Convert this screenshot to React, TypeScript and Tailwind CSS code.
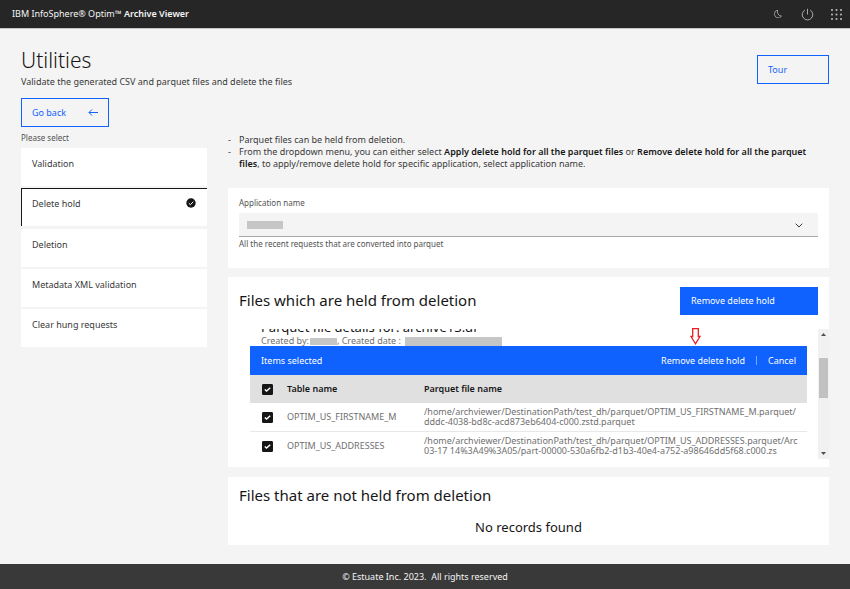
import React from "react";

const utilities = [
  "Validation",
  "Delete hold",
  "Deletion",
  "Metadata XML validation",
  "Clear hung requests",
];

const files = [
  {
    table: "OPTIM_US_FIRSTNAME_M",
    lines: [
      "/home/archviewer/DestinationPath/test_dh/parquet/OPTIM_US_FIRSTNAME_M.parquet/",
      "dddc-4038-bd8c-acd873eb6404-c000.zstd.parquet",
    ],
  },
  {
    table: "OPTIM_US_ADDRESSES",
    lines: [
      "/home/archviewer/DestinationPath/test_dh/parquet/OPTIM_US_ADDRESSES.parquet/Arc",
      "03-17 14%3A49%3A05/part-00000-530a6fb2-d1b3-40e4-a752-a98646dd5f68.c000.zs",
    ],
  },
];

function MoonIcon() {
  return (
    <svg viewBox="0 0 32 32" className="size-2.5" fill="currentColor" aria-hidden="true">
      <path d="M13.5 5.41A15.08 15.08 0 0 0 25.1 23.61a11.11 11.11 0 0 1-7.98 3.39c-.14 0-.28.005-.42 0A11.09 11.09 0 0 1 13.5 5.41M14.98 3a1 1 0 0 0-.17.016A13.1 13.1 0 0 0 16.63 29c.16.006.33 0 .49 0a13.07 13.07 0 0 0 10.7-5.56 1.01 1.01 0 0 0-.78-1.56A13.08 13.08 0 0 1 15.89 4.38 1.01 1.01 0 0 0 14.98 3Z" />
    </svg>
  );
}

function PowerIcon() {
  return (
    <svg viewBox="0 0 32 32" className="size-[13px]" fill="none" stroke="currentColor" strokeWidth="2" aria-hidden="true">
      <path d="M22.5 5.05a13 13 0 1 1-13 0M16 2v14" />
    </svg>
  );
}

function GridIcon() {
  const spots = [1, 5.5, 10];
  return (
    <svg viewBox="0 0 11 11" className="size-[11px]" fill="currentColor" aria-hidden="true">
      {spots.map((y) =>
        spots.map((x) => <rect key={x + "-" + y} x={x - 0.85} y={y - 0.85} width="1.7" height="1.7" />),
      )}
    </svg>
  );
}

function CheckBox({ label }: { label: string }) {
  return (
    <span className="relative block size-[11px]">
      <input
        type="checkbox"
        defaultChecked
        aria-label={label}
        className="peer block size-[11px] appearance-none rounded-[1px] border border-[#161616] checked:bg-[#161616]"
      />
      <svg viewBox="0 0 11 11" className="pointer-events-none absolute inset-0 hidden peer-checked:block" fill="none" stroke="white" strokeWidth="1.4" aria-hidden="true">
        <path d="M2.8 5.4 4.6 7.1 8.2 3.7" />
      </svg>
    </span>
  );
}

export default function App() {
  const [selected, setSelected] = React.useState("Delete hold");
  return (
    <div className="flex min-h-screen flex-col bg-[#f4f4f4] font-['Noto_Sans',sans-serif] text-[9px] leading-3 text-[#393939]">
      <header className="flex h-[29px] items-center justify-between border-b border-[#c6c6c6] bg-[#262626] pr-2 pl-3 text-[#f4f4f4]">
        <p>
          IBM InfoSphere® Optim™ <b className="font-semibold">Archive Viewer</b>
        </p>
        <div className="flex items-center text-[#c6c6c6]">
          <button type="button" aria-label="Dark mode" className="mr-[18px]"><MoonIcon /></button>
          <button type="button" aria-label="Log out" className="mr-[17px]"><PowerIcon /></button>
          <button type="button" aria-label="Applications"><GridIcon /></button>
        </div>
      </header>

      <main className="flex-1 px-[21px] pb-[19px]">
        <div className="flex items-start justify-between">
          <div className="pt-[18px]">
            <h1 className="text-[21px] leading-[26px] font-light text-[#161616]">Utilities</h1>
            <p className="mt-[3px]">Validate the generated CSV and parquet files and delete the files</p>
          </div>
          <button type="button" className="mt-[26px] h-[29px] w-[72px] border border-[#0f62fe] px-2.5 text-left text-[#0f62fe]">
            Tour
          </button>
        </div>
        <button type="button" className="mt-[10px] flex h-[29px] w-[88px] items-center justify-between border border-[#0f62fe] px-2.5 text-[#0f62fe]">
          Go back
          <svg viewBox="0 0 10 8" className="h-2 w-2.5" fill="none" stroke="currentColor" aria-hidden="true">
            <path d="M10 3.5H1M4 .5 1 3.5 4 6.5" />
          </svg>
        </button>

        <div className="mt-[5px] flex gap-[21px]">
          <fieldset className="w-[186px] shrink-0">
            <legend className="mb-1 text-[8px] text-[#525252]">Please select</legend>
            <div className="flex h-[199px] flex-col justify-between">
              {utilities.map((name) => (
                <label
                  key={name}
                  className="flex h-[38px] items-start justify-between border-t border-white bg-white px-[11px] pt-[9px] has-checked:border-l has-checked:border-[#161616] has-checked:pl-2.5"
                >
                  {name}
                  <input
                    type="radio"
                    name="utility"
                    checked={selected === name}
                    onChange={() => setSelected(name)}
                    className="peer size-0 appearance-none"
                  />
                  <svg viewBox="0 0 10 10" className="hidden size-2.5 peer-checked:block" aria-hidden="true">
                    <circle cx="5" cy="5" r="4.7" fill="#161616" />
                    <path d="M2.8 5.2 4.4 6.7 7.3 3.8" fill="none" stroke="white" />
                  </svg>
                </label>
              ))}
            </div>
          </fieldset>

          <div className="min-w-0 flex-1">
            <ul className="pt-[2px] pr-[11px]">
              <li className="flex"><span className="w-[11px] shrink-0">-</span>Parquet files can be held from deletion.</li>
              <li className="flex">
                <span className="w-[11px] shrink-0">-</span>
                <span>
                  From the dropdown menu, you can either select <b className="font-semibold text-[#161616]">Apply delete hold for all the parquet files</b> or{" "}
                  <b className="font-semibold text-[#161616]">Remove delete hold for all the parquet files</b>, to apply/remove delete hold for specific application, select application name.
                </span>
              </li>
            </ul>

            <section className="mt-[18px] h-20 bg-white px-[11px] pt-[9px]">
              <label htmlFor="application" className="block text-[8px] text-[#525252]">Application name</label>
              <div className="relative mt-1">
                <select id="application" className="block h-6 w-full appearance-none border-b border-[#a8a8a8] bg-[#f4f4f4] px-2">
                  <option aria-label="Application" />
                </select>
                <span className="absolute top-2 left-2 h-2 w-9 bg-[#c6c6c6]" />
                <svg viewBox="0 0 8 5" className="pointer-events-none absolute top-[10px] right-[15px] h-[5px] w-2" fill="none" stroke="#393939" aria-hidden="true">
                  <path d="M.7.7 4 4 7.3.7" />
                </svg>
              </div>
              <p className="mt-px text-[8px] text-[#525252]">All the recent requests that are converted into parquet</p>
            </section>

            <section className="mt-[9px] h-[190px] bg-white pt-[10px]">
              <div className="flex items-center justify-between px-[11px]">
                <h2 className="pb-0.5 text-[15px] leading-5 text-[#161616]">Files which are held from deletion</h2>
                <button type="button" className="h-7 w-[138px] bg-[#0f62fe] px-[11px] text-left text-white">Remove delete hold</button>
              </div>

              <div className="relative mt-[14px] flex h-[130px]">
                <div className="min-w-0 flex-1 overflow-hidden pr-[11px] pl-[22px]">
                  <h3 className="-mt-[11px] pl-[11px] text-[13px] leading-[18px] text-[#161616]">Parquet file details for: archive13.df</h3>
                  <p className="flex h-[10px] items-center pl-[11px] text-[#6f6f6f]">
                    Created by:<span className="ml-px h-[7px] w-[27px] bg-[#c6c6c6]" />, Created date :
                    <span className="ml-1 h-[9px] w-[97px] bg-[#c6c6c6]" />
                  </p>
                  <div className="flex h-[29px] items-center bg-[#0f62fe] px-[11px] text-white">
                    <span className="flex-1">Items selected</span>
                    <button type="button">Remove delete hold</button>
                    <span className="mx-[11px] h-[9px] w-px bg-[#78a9ff]" />
                    <button type="button">Cancel</button>
                  </div>
                  <table className="w-full table-fixed border-separate border-spacing-0 text-left text-[#6f6f6f]">
                    <thead>
                      <tr className="h-7 bg-[#e0e0e0] text-[#161616]">
                        <th className="w-[37px] pl-3"><CheckBox label="Select all rows" /></th>
                        <th className="w-[137px] font-semibold">Table name</th>
                        <th className="font-semibold">Parquet file name</th>
                      </tr>
                    </thead>
                    <tbody>
                      {files.map((file) => (
                        <tr key={file.table} className="h-[29px]">
                          <td className="border-b border-[#e8e8e8] pl-3"><CheckBox label={"Select " + file.table} /></td>
                          <td className="border-b border-[#e8e8e8]">{file.table}</td>
                          <td className="overflow-hidden border-b border-[#e8e8e8] leading-[10px] whitespace-nowrap">
                            {file.lines[0]}
                            <br />
                            {file.lines[1]}
                          </td>
                        </tr>
                      ))}
                    </tbody>
                  </table>
                </div>
                <div className="flex w-[11px] flex-col items-center justify-between bg-[#f1f1f1] py-1" aria-hidden="true">
                  <svg viewBox="0 0 5 3" className="h-[3px] w-[5px]"><path d="M0 3 2.5 0 5 3Z" fill="#505050" /></svg>
                  <span className="mb-[33px] h-10 w-[9px] bg-[#c1c1c1]" />
                  <svg viewBox="0 0 5 3" className="h-[3px] w-[5px]"><path d="M0 0 2.5 3 5 0Z" fill="#505050" /></svg>
                </div>
                <svg viewBox="0 0 11 17" className="absolute -top-px right-[128px] h-[17px] w-[11px]" fill="white" stroke="#ed1c24" strokeWidth="1.3" aria-hidden="true">
                  <path d="M2.7.7H8.3V8.5H10L5.5 15.8 1 8.5H2.7Z" />
                </svg>
              </div>
            </section>

            <section className="mt-[10px] h-[68px] bg-white px-[11px] pt-2">
              <h2 className="text-[15px] leading-5 text-[#161616]">Files that are not held from deletion</h2>
              <p className="mt-[13px] text-center text-[13px] leading-[18px] text-[#161616]">No records found</p>
            </section>
          </div>
        </div>
      </main>

      <footer className="flex h-[25px] items-center justify-center bg-[#393939] text-[#f4f4f4]">
        <p>© Estuate Inc. 2023.&nbsp; All rights reserved</p>
      </footer>
    </div>
  );
}
